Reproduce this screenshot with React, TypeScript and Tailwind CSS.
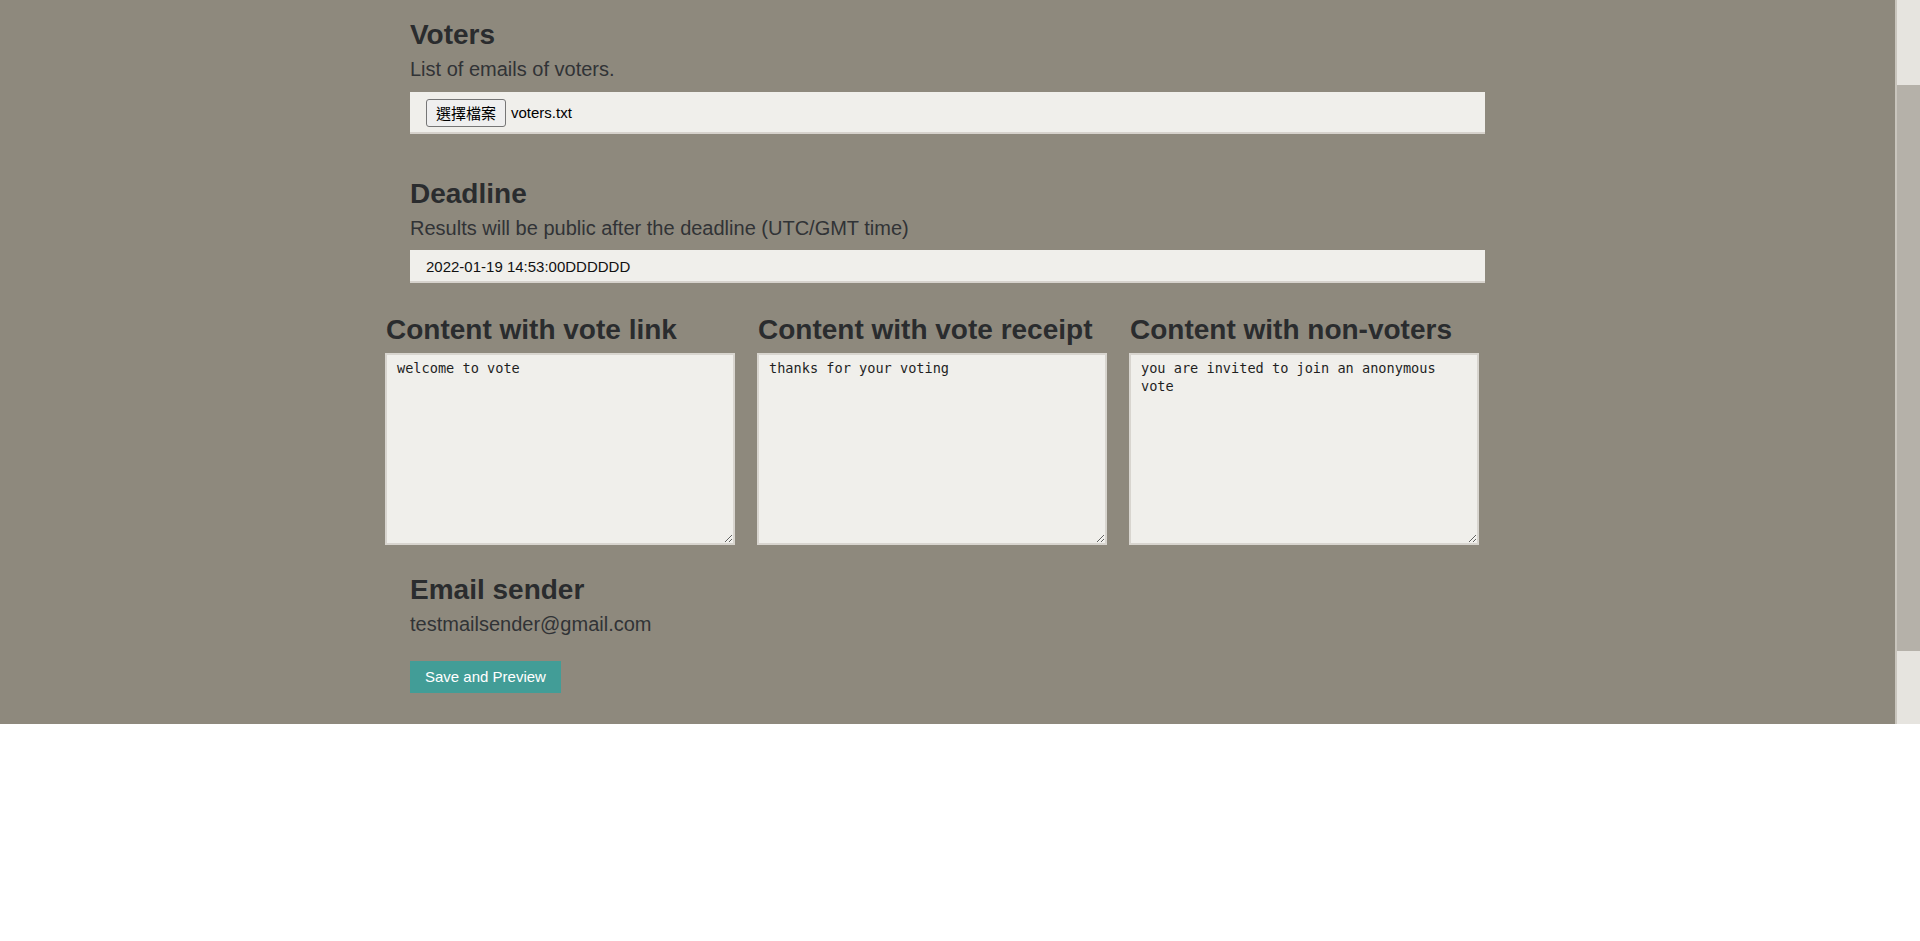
import React from "react";

const headingCls =
  "pt-px text-[28px] leading-[32px] font-bold text-[#2a2c2e] whitespace-nowrap";
const descCls = "text-[20px] leading-[24px] text-[#313336] whitespace-nowrap";

function Column({ title, text }: { title: string; text: string }) {
  return (
    <div className="w-[350px] flex flex-col">
      <h3 className={headingCls + " pl-px"}>{title}</h3>
      <textarea
        readOnly
        defaultValue={text}
        className="mt-[7px] h-[192px] w-[350px] resize bg-[#f0efeb] border-2 border-[#d8d5cf] pt-[4px] px-[10px] text-[13.6px] leading-[18px] text-[#1f1f1f] font-['DejaVu_Sans_Mono','Liberation_Mono',monospace] outline-none"
      />
    </div>
  );
}

export default function App() {
  return (
    <div className="w-[1920px] h-[941px] bg-white font-['Liberation_Sans',Arial,sans-serif]">
      <div className="flex h-[724px]">
        <div className="flex-1 bg-[#8e897d] overflow-hidden">
          <div className="mx-auto w-[1075px] pt-[18px]">
            <h3 className={headingCls}>Voters</h3>
            <p className={"mt-[6px] " + descCls}>List of emails of voters.</p>
            <div className="mt-[11px] h-[42px] bg-[#f0efeb] border-b-2 border-[#d6d2cc] flex items-center pl-[16px] pt-[2px]">
              <span className="h-[28px] px-[9px] border border-[#767676] rounded-[3px] bg-[#efefef] text-[15px] leading-[26px] text-black font-['Noto_Sans_CJK_TC','Noto_Sans_CJK_SC',sans-serif]">
                選擇檔案
              </span>
              <span className="ml-[5px] text-[15px] text-black">voters.txt</span>
            </div>

            <h3 className={"mt-[43px] " + headingCls}>Deadline</h3>
            <p className={"mt-[6px] " + descCls}>
              Results will be public after the deadline (UTC/GMT time)
            </p>
            <div className="mt-[10px] h-[33px] bg-[#f0efeb] border-b-2 border-[#d6d2cc] flex items-center pl-[16px] pt-[3px] text-[15px] text-[#111]">
              2022-01-19 14:53:00DDDDDD
            </div>

            <div className="mt-[30px] -ml-[25px] flex gap-[22px]">
              <Column title="Content with vote link" text="welcome to vote" />
              <Column
                title="Content with vote receipt"
                text="thanks for your voting"
              />
              <Column
                title="Content with non-voters"
                text="you are invited to join an anonymous vote"
              />
            </div>

            <h3 className={"mt-[28px] " + headingCls}>Email sender</h3>
            <p className={"mt-[6px] " + descCls}>testmailsender@gmail.com</p>
            <button className="mt-[25px] h-[32px] px-[15px] bg-[#429d97] text-white text-[15px] leading-[32px]">
              Save and Preview
            </button>
          </div>
        </div>
        <div className="w-[2px] bg-[#c9c5bd]" />
        <div className="w-[23px] bg-[#e6e4df] flex flex-col">
          <div className="h-[85px]" />
          <div className="h-[566px] bg-[#b5b1a9]" />
        </div>
      </div>
    </div>
  );
}
